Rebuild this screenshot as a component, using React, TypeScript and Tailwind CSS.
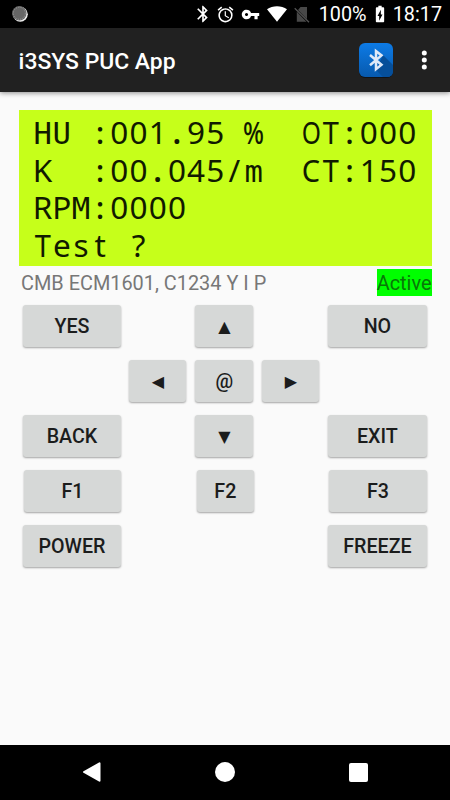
import React from 'react';
import { MdAlarm, MdBatteryChargingFull, MdBluetooth, MdVpnKey } from 'react-icons/md';
import clsx from 'clsx';

const LINES = ['HU :001.95 %  OT:000', 'K  :00.045/m  CT:150', 'RPM:0000', 'Test ?'];

// glyphs that are too wide or too light for the fixed display cell
const GLYPHS: Record<string, string> = {
  H: "font-['DejaVu_Sans_Mono',monospace] text-[30.6px]",
  U: "font-['DejaVu_Sans_Mono',monospace] text-[30.6px]",
  O: 'scale-x-[0.78]',
  M: "font-['DejaVu_Sans_Mono',monospace] text-[30.6px]",
  m: "font-['DejaVu_Sans_Mono',monospace] text-[30.6px]",
  C: 'scale-x-[0.92]',
  T: 'scale-x-[0.92]',
  '%': 'scale-x-[0.78] font-medium',
  ':': 'font-medium',
  '.': 'font-semibold',
};

const StatusBar = () => (
  <div className="flex h-7 items-center bg-black pl-3 pr-2 text-white">
    <svg className="h-4 w-4" viewBox="0 0 16 16">
      <circle cx="8.3" cy="8.3" r="7.5" fill="#eee" />
      <circle cx="7.3" cy="7.3" r="7.2" fill="#666" />
      <circle cx="7.3" cy="7.3" r="6" fill="none" stroke="#999" strokeWidth="1" strokeDasharray="1.2 1.2" />
    </svg>
    <div className="ml-auto flex items-center">
      <MdBluetooth className="h-5 w-5" />
      <MdAlarm className="ml-[3px] h-[19px] w-[19px]" />
      <MdVpnKey className="ml-[6px] h-[19px] w-[19px]" />
      <svg className="ml-[7px] h-4 w-5" viewBox="0 0 20 16">
        <path d="M0 3.2C5.5-.8 14.5-.8 20 3.2L10 15.7Z" fill="white" />
      </svg>
      <svg className="ml-[7px] h-[17px] w-4" viewBox="0 0 16 17">
        <path d="M6.5 1H13v12.2L4 4ZM2.8 5.8 12.5 15.8H2.8Z" fill="#484848" />
        <path d="M.7 2.2 15 16.2" stroke="#555" strokeWidth="1.2" />
      </svg>
      <span className="ml-[9px] w-[48px] pt-px text-[19.8px] leading-7">100%</span>
      <MdBatteryChargingFull className="ml-[3px] h-5 w-5" />
      <span className="ml-[3px] pt-px text-[19.8px] leading-7">18:17</span>
    </div>
  </div>
);

const AppBar = () => (
  <header className="relative flex h-16 items-center bg-[#212121] pl-[18.6px] pr-[19px] text-white shadow-[0_1px_5px_rgba(0,0,0,0.45)]">
    <h1 className="pt-[4px] text-[22.9px] font-medium">i3SYS PUC App</h1>
    <svg className="ml-auto h-9 w-9" viewBox="0 0 36 36">
      <defs>
        <linearGradient id="tile" x1="0" y1="0" x2="0" y2="1">
          <stop offset="0" stopColor="#0d7be6" />
          <stop offset="1" stopColor="#0759ad" />
        </linearGradient>
      </defs>
      <rect x="1" y="2" width="34" height="34" rx="6" fill="#101318" />
      <rect x="1" y="1" width="34" height="34" rx="6" fill="url(#tile)" />
      <path d="m25 13 10 10v6q0 6-6 6h-4l-7-7Z" fill="#064f9a" />
      <path d="m12 13 11.5 9.8-5.5 4.4V9l5.5 4.4L12 23.2" fill="none" stroke="#dfe9f8" strokeWidth="2.5" />
    </svg>
    <svg className="ml-[23px] h-5 w-[14px]" viewBox="0 0 14 20">
      <circle cx="7.3" cy="3" r="2.5" fill="white" />
      <circle cx="7.3" cy="10" r="2.5" fill="white" />
      <circle cx="7.3" cy="17" r="2.5" fill="white" />
    </svg>
  </header>
);

const Display = () => (
  <div className="h-[156px] bg-[#c6ff1a] pl-[14px] pt-[3px] font-['Noto_Sans','Open_Sans',sans-serif] text-[31.5px] text-[#111a00]">
    {LINES.map((line) => (
      <div key={line} className="flex h-[37.5px] items-baseline whitespace-pre leading-[37.5px]">
        {line.split('').map((char, i) => (
          <span key={i} className="flex w-[19.2px] shrink-0 items-baseline justify-center">
            <span className={clsx('inline-block', GLYPHS[char])}>{char}</span>
          </span>
        ))}
      </div>
    ))}
  </div>
);

const Key = ({ label, className }: { label: string; className: string }) => (
  <button
    className={clsx(
      'h-[42px] shrink-0 rounded-[3px] bg-[#d6d8d7] pt-[2px] text-center font-medium text-[#1b1c1c] shadow-[0_1px_2px_rgba(0,0,0,0.35)]',
      /[▲▼◀▶]/.test(label) ? "font-['DejaVu_Sans',sans-serif] text-[16px]" : 'text-[19.7px]',
      className,
    )}
  >
    {label}
  </button>
);

const Keypad = () => (
  <div className="flex flex-col gap-[13px] pl-[23.3px] pr-[23.3px] pt-[9px]">
    <div className="flex justify-between">
      <Key label="YES" className="w-[97.3px]" />
      <Key label="▲" className="w-[58px]" />
      <Key label="NO" className="w-[98.5px]" />
    </div>
    <div className="flex gap-[9px] pl-[106px]">
      <Key label="◀" className="w-[57px]" />
      <Key label="@" className="w-[58px]" />
      <Key label="▶" className="w-[57px]" />
    </div>
    <div className="flex justify-between">
      <Key label="BACK" className="w-[97.3px]" />
      <Key label="▼" className="w-[58px]" />
      <Key label="EXIT" className="w-[98.5px]" />
    </div>
    <div className="flex justify-between pl-px">
      <Key label="F1" className="w-[96.3px]" />
      <Key label="F2" className="ml-px w-[57px]" />
      <Key label="F3" className="w-[97.5px]" />
    </div>
    <div className="flex justify-between">
      <Key label="POWER" className="w-[97.3px]" />
      <Key label="FREEZE" className="w-[98.5px]" />
    </div>
  </div>
);

const NavBar = () => (
  <nav className="mt-auto flex h-[55px] items-center justify-between bg-black pb-px pl-[82px] pr-[82px]">
    <svg className="h-5 w-5" viewBox="0 0 20 20">
      <path d="M2 10 17.5 1.3v17.4Z" fill="white" stroke="white" strokeWidth="2" strokeLinejoin="round" />
    </svg>
    <div className="mr-px h-5 w-5 rounded-full bg-white" />
    <div className="h-[19px] w-[19px] rounded-[2px] bg-white" />
  </nav>
);

export default function App() {
  return (
    <div className="flex h-[800px] w-[450px] flex-col overflow-hidden bg-[#fafafa] font-['Roboto',sans-serif]">
      <StatusBar />
      <AppBar />
      <main className="pt-[18px]">
        <div className="pl-[19px] pr-[18.5px]">
          <Display />
          <div className="flex h-[29.5px] items-start justify-between pl-[2px] pt-[2.5px] text-[19.9px]">
            <span className="leading-[29px] text-[#777]">CMB ECM1601, C1234 Y I P</span>
            <span className="h-[27px] bg-[#00ff00] leading-[29px] text-[#087808]">Active</span>
          </div>
        </div>
        <Keypad />
      </main>
      <NavBar />
    </div>
  );
}
